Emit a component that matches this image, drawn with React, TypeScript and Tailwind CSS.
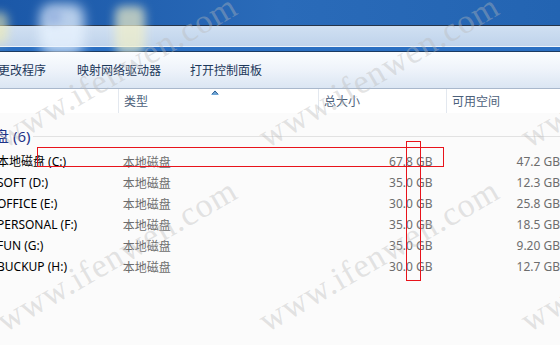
const DRIVES = [
  { name: '本地磁盘 (C:)', size: '67.8 GB', free: '47.2 GB' },
  { name: 'SOFT (D:)', size: '35.0 GB', free: '12.3 GB' },
  { name: 'OFFICE (E:)', size: '30.0 GB', free: '25.8 GB' },
  { name: 'PERSONAL (F:)', size: '35.0 GB', free: '18.5 GB' },
  { name: 'FUN (G:)', size: '35.0 GB', free: '9.20 GB' },
  { name: 'BUCKUP (H:)', size: '30.0 GB', free: '12.7 GB' },
]

// watermark grid: start point of each "www.ifenwen.com" (baseline, left end)
const MARKS: { x: number; y: number }[] = []
for (const x of [8, 270, 532]) {
  for (const y of [152, 336]) MARKS.push({ x, y })
}

function Watermark({ x, y }: { x: number; y: number }) {
  return (
    <span
      className="absolute whitespace-nowrap font-['Liberation_Serif',serif] text-[34px] leading-none tracking-[1px] text-[rgba(185,185,185,0.4)] origin-bottom-left -rotate-[30deg] pointer-events-none"
      style={{ left: x, top: y - 32 }}
    >
      www.ifenwen.com
    </span>
  )
}

export default function App() {
  return (
    <div className="relative w-[560px] h-[345px] overflow-hidden bg-[#fbfbfb] font-['Noto_Sans','Noto_Sans_CJK_SC',sans-serif] text-[12px]">
      {/* ── window chrome (glass) ── */}
      <div className="relative overflow-hidden">
        <div className="h-[25px] bg-gradient-to-r from-[#1b58a8] via-[#2a6bb9] to-[#2364b2]" />
        <div className="h-px bg-[#26354a]" />
        <div className="h-[20px] bg-gradient-to-b from-[#d0e0f2] to-[#bfd3eb]" />
        <div className="h-px bg-[#eef4fb]" />
        <div className="h-[4px] bg-[#2a6fc2]" />
        <div className="h-px bg-[#1b3b63]" />
        {/* blurred desktop icons behind the glass */}
        <div className="absolute left-[-10px] top-[12px] w-[18px] h-[32px] rounded-lg bg-[#f3eeb0] opacity-60 blur-[5px]" />
        <div className="absolute left-[40px] top-[4px] w-[44px] h-[50px] rounded-xl bg-[#eaf4ff] opacity-75 blur-[6px]" />
        <div className="absolute left-[46px] top-[10px] w-[16px] h-[14px] rounded-full bg-[#7d9bd8] opacity-50 blur-[4px]" />
        <div className="absolute left-[115px] top-[6px] w-[30px] h-[48px] rounded-lg bg-[#f2f0c8] opacity-70 blur-[5px]" />
      </div>

      {/* ── command bar ── */}
      <div className="h-[37px] flex items-center bg-gradient-to-b from-[#fbfdff] via-[#eef3fa] to-[#dbe6f3] border-b border-[#a9b8cc] text-[#1e395b] font-['Noto_Sans_CJK_SC',sans-serif]">
        <span className="ml-[-2px] w-[79px]">更改程序</span>
        <span className="w-[113px]">映射网络驱动器</span>
        <span>打开控制面板</span>
      </div>

      {/* ── column headers ── */}
      <div className="relative h-[24px] flex items-center bg-white text-[#4c607a] font-['Noto_Sans_CJK_SC',sans-serif]">
        <div className="w-[118px] h-full" />
        <div className="w-[200px] h-full border-l border-[#e3e8ef] flex items-center pl-[5px]">类型</div>
        <div className="w-[128px] h-full border-l border-[#e3e8ef] flex items-center pl-[5px]">总大小</div>
        <div className="flex-1 h-full border-l border-[#e3e8ef] flex items-center pl-[5px]">可用空间</div>
        <svg className="absolute left-[211px] top-[1px]" width="8" height="5" viewBox="0 0 8 5">
          <path d="M0 5 L4 0.5 L8 5 Z" fill="#6fa6d6" />
          <path d="M1.2 4 L4 1 L6.8 4" stroke="#2f5f93" strokeWidth="1" fill="none" />
        </svg>
      </div>

      {/* ── group + rows ── */}
      <div className="pt-[12px]">
        <div className="h-[22px] flex items-center gap-[3px] text-[15px] text-[#1e3287] font-['Noto_Sans','Noto_Sans_CJK_SC',sans-serif]">
          <span className="ml-[-6px]">盘 (6)</span>
          <div className="flex-1 h-px bg-[#e2e2e2]" />
        </div>
        <div className="mt-[4px]">
          {DRIVES.map((d) => (
            <div key={d.name} className="h-[21px] flex items-center whitespace-nowrap">
              <span className="ml-[-3px] w-[127px] text-black">{d.name}</span>
              <span className="w-[100px] text-[#6d6d6d] font-['Noto_Sans_CJK_SC',sans-serif]">本地磁盘</span>
              <span className="w-[213px] text-right text-[#6d6d6d]">{d.size}</span>
              <span className="ml-[84px] text-[#6d6d6d]">{d.free}</span>
            </div>
          ))}
        </div>
      </div>

      {/* ── watermark ── */}
      {MARKS.map((m) => (
        <Watermark key={`${m.x}-${m.y}`} x={m.x} y={m.y} />
      ))}

      {/* ── annotation boxes ── */}
      <div className="absolute left-[37px] top-[147px] w-[407px] h-[20px] border-[1.5px] border-[#e8131b]" />
      <div className="absolute left-[406px] top-[141px] w-[15px] h-[140px] border-[1.5px] border-[#e8131b]" />
    </div>
  )
}
